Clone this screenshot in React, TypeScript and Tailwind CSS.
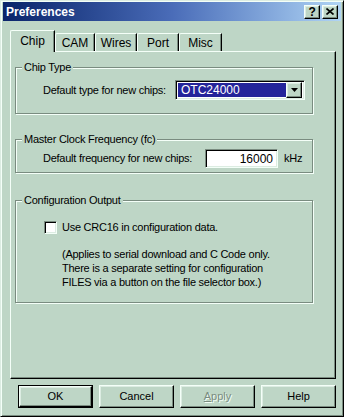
const raised =
  "border-t border-l border-[#f4fff8] border-r border-b border-r-black border-b-black shadow-[inset_-1px_-1px_0_#7a8c80,inset_1px_1px_0_#dcece2]";
const sunken =
  "border-t border-l border-[#7a8c80] border-r border-b border-r-[#f4fff8] border-b-[#f4fff8] shadow-[inset_1px_1px_0_#000,inset_-1px_-1px_0_#dcece2]";

function TitleButton({ children }: { children: React.ReactNode }) {
  return (
    <div className={`w-[16px] h-[14px] bg-[#bed6c6] flex items-center justify-center ${raised}`}>
      {children}
    </div>
  );
}

function Tab({ label, active }: { label: string; active?: boolean }) {
  return (
    <div
      className={
        active
          ? "relative z-10 -mb-px h-[22px] w-[45px] bg-[#bed6c6] border-t border-l border-[#f4fff8] border-r border-r-black rounded-tl-[2px] shadow-[inset_-1px_0_0_#7a8c80] flex items-center justify-center pb-[2px] text-[12px]"
          : "h-[18px] bg-[#bed6c6] border-t border-l border-[#f4fff8] border-r border-r-black rounded-tl-[2px] shadow-[inset_-1px_0_0_#7a8c80] flex items-center justify-center text-[12px]"
      }
      style={active ? undefined : { width: label === "CAM" ? 40 : label === "Misc" ? 43 : 42 }}
    >
      {label}
    </div>
  );
}

function Group({
  title,
  height,
  className,
  children,
}: {
  title: string;
  height: number;
  className: string;
  children: React.ReactNode;
}) {
  return (
    <fieldset
      className={`ml-[4px] w-[298px] border border-[#7a8c80] shadow-[inset_1px_1px_0_#f4fff8,1px_1px_0_#f4fff8] ${className}`}
      style={{ height }}
    >
      <legend className="ml-[6px] px-[2px] leading-[14px] bg-[#bed6c6]">{title}</legend>
      {children}
    </fieldset>
  );
}

function Button({ label, def, disabled }: { label: React.ReactNode; def?: boolean; disabled?: boolean }) {
  const inner = (
    <div
      className={`h-full w-full flex items-center justify-center bg-[#bed6c6] ${raised} ${
        disabled ? "text-[#7a8c80] [text-shadow:1px_1px_0_#f4fff8]" : "text-black"
      }`}
    >
      {label}
    </div>
  );
  return def ? (
    <div className="w-[75px] h-[23px] border border-black">{inner}</div>
  ) : (
    <div className="w-[75px] h-[23px]">{inner}</div>
  );
}

export default function App() {
  return (
    <div
      className="w-[344px] h-[417px] bg-[#bed6c6] border-t border-l border-[#dcece2] border-r border-b border-r-black border-b-black shadow-[inset_1px_1px_0_#f4fff8,inset_-1px_-1px_0_#7a8c80] pt-[1px] px-[2px] text-[11px] tracking-[-0.25px] text-black overflow-hidden"
      style={{ fontFamily: '"Liberation Sans", Arial, sans-serif' }}
    >
      <div className="h-[19px] bg-gradient-to-r from-[#0a246a] via-[#4a6cb8] to-[#b0d4f4] flex items-center justify-between pl-[3px] pr-[3px]">
        <span className="text-white font-bold text-[12px] tracking-normal">Preferences</span>
        <div className="flex gap-[2px]">
          <TitleButton>
            <span className="font-bold text-[12px] leading-none">?</span>
          </TitleButton>
          <TitleButton>
            <svg width="8" height="7" viewBox="0 0 8 7">
              <path d="M0.5 0.5L7.5 6.5M7.5 0.5L0.5 6.5" stroke="#000" strokeWidth="1.6" />
            </svg>
          </TitleButton>
        </div>
      </div>

      <div className="mt-[9px] flex items-end h-[21px] pl-[7px] tracking-normal">
        <Tab label="Chip" active />
        <Tab label="CAM" />
        <Tab label="Wires" />
        <Tab label="Port" />
        <Tab label="Misc" />
      </div>

      <div className="ml-[7px] w-[326px] h-[328px] border-t border-l border-[#f4fff8] border-r border-b border-r-black border-b-black shadow-[inset_-1px_-1px_0_#7a8c80] pt-[8px]">
        <Group title="Chip Type" height={54} className="">
          <div className="mt-[6px] h-[20px] pl-[27px] flex items-center">
            <span className="w-[132px]">Default type for new chips:</span>
            <div className={`w-[130px] h-[20px] bg-white flex items-center ${sunken} p-[2px]`}>
              <div className="flex-1 h-full bg-[#24249a] text-white text-[12px] tracking-normal flex items-center pl-[3px]">
                OTC24000
              </div>
              <div className={`w-[16px] h-[16px] bg-[#bed6c6] flex items-center justify-center ${raised}`}>
                <svg width="7" height="4" viewBox="0 0 7 4">
                  <path d="M0 0H7L3.5 4Z" fill="#000" />
                </svg>
              </div>
            </div>
          </div>
        </Group>

        <Group title="Master Clock Frequency (fc)" height={41} className="mt-[18px]">
          <div className="mt-[3px] h-[19px] pl-[27px] flex items-center">
            <span className="w-[162px]">Default frequency for new chips:</span>
            <div className={`w-[73px] h-[19px] bg-white flex items-center justify-end pr-[4px] text-[12px] tracking-normal ${sunken}`}>
              16000
            </div>
            <span className="ml-[6px]">kHz</span>
          </div>
        </Group>

        <Group title="Configuration Output" height={110} className="mt-[20px]">
          <div className="mt-[14px] pl-[28px] flex items-center h-[13px]">
            <div className={`w-[13px] h-[13px] bg-white ${sunken}`} />
            <span className="ml-[5px]">Use CRC16 in configuration data.</span>
          </div>
          <div className="mt-[13px] pl-[46px] leading-[14px]">
            <div>(Applies to serial download and C Code only.</div>
            <div>There is a separate setting for configuration</div>
            <div>FILES via a button on the file selector box.)</div>
          </div>
        </Group>
      </div>

      <div className="mt-[6px] pl-[15px] flex gap-[6px] tracking-normal">
        <Button label="OK" def />
        <Button label="Cancel" />
        <Button
          label={
            <span>
              <span className="underline">A</span>pply
            </span>
          }
          disabled
        />
        <Button label="Help" />
      </div>
    </div>
  );
}
